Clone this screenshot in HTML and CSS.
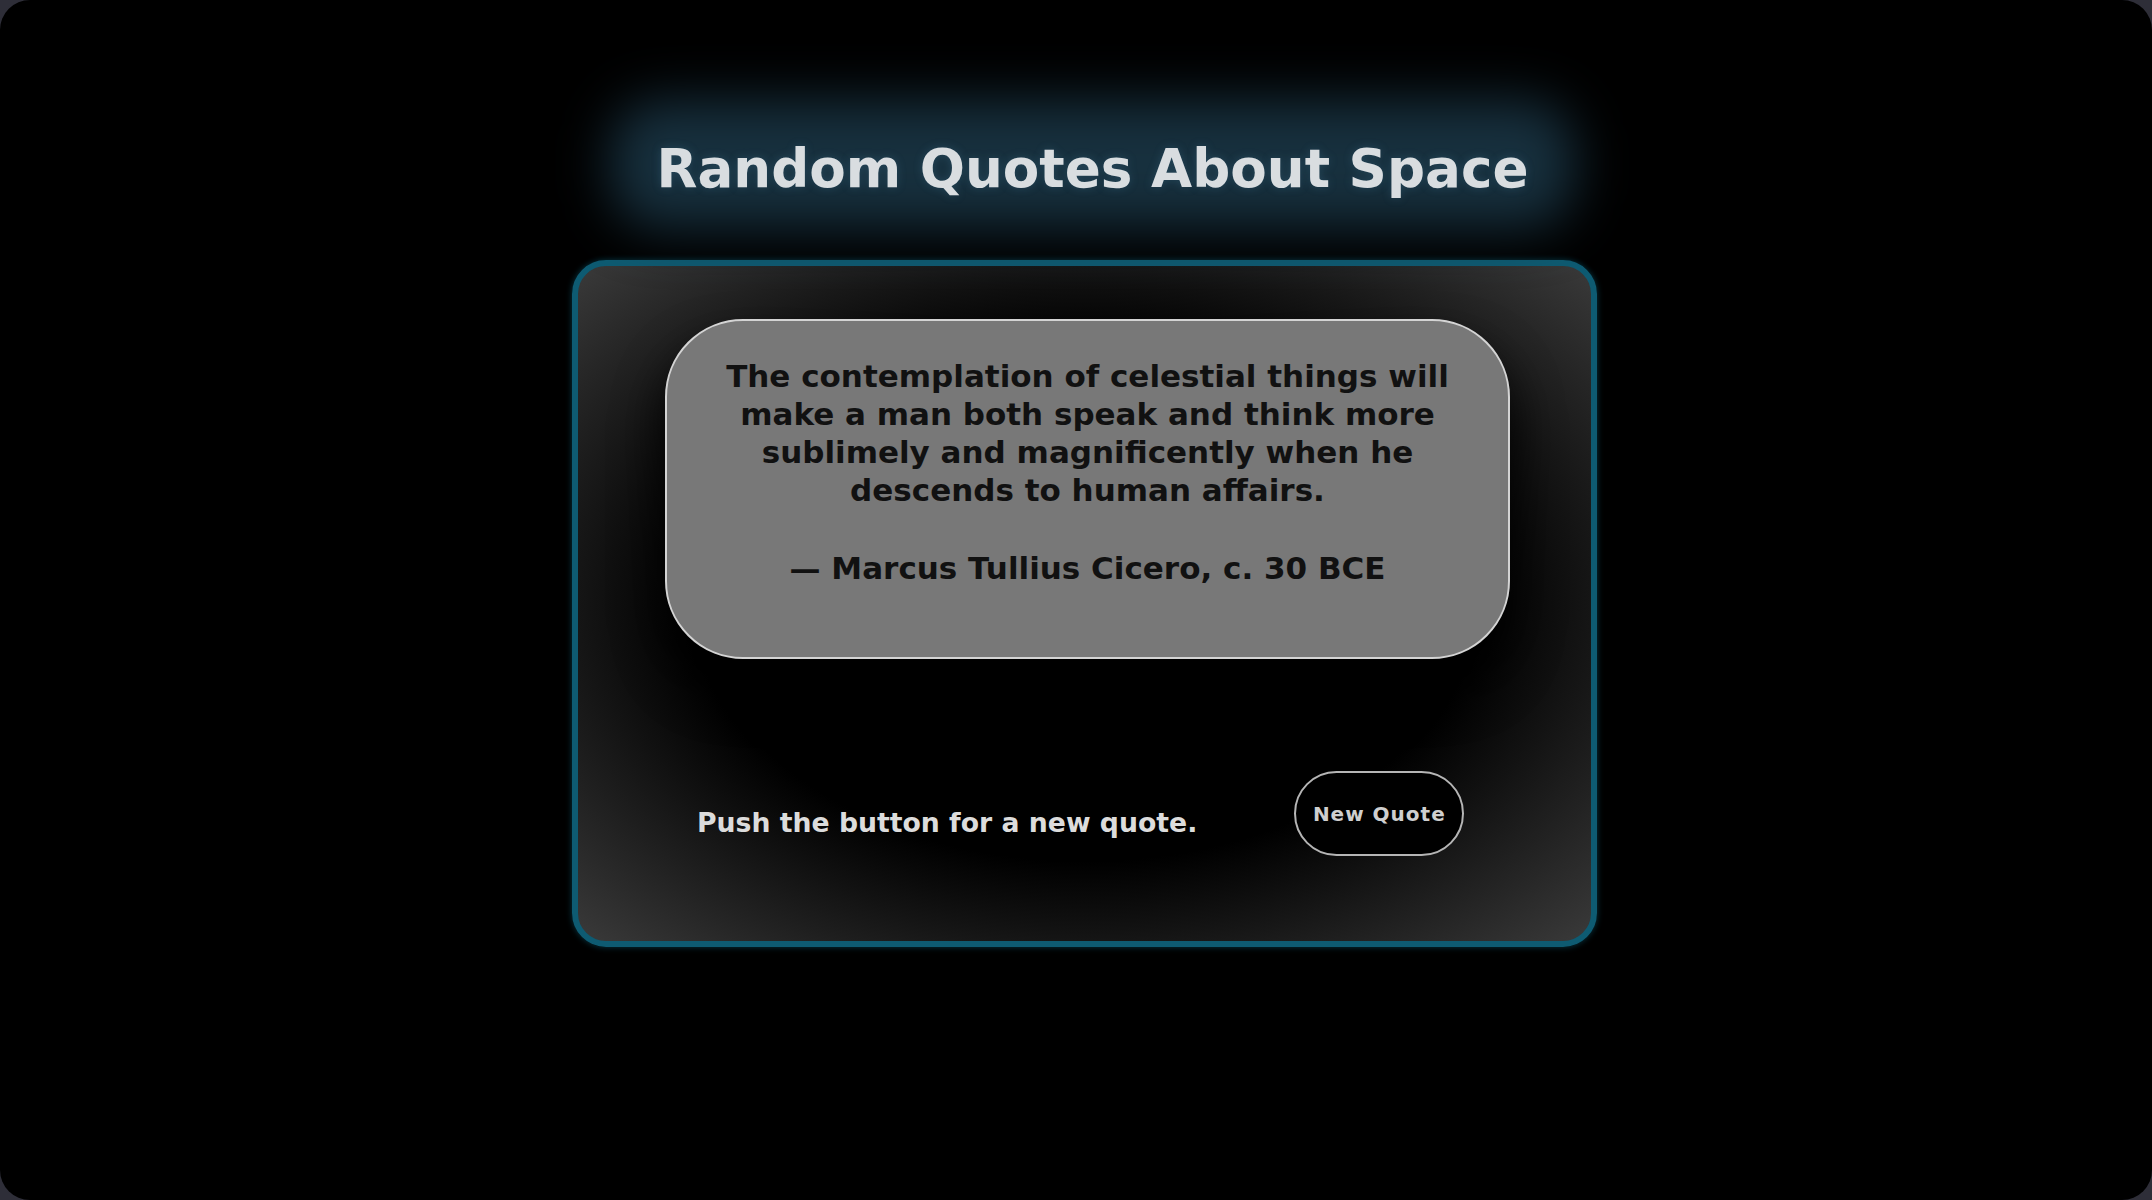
FILE: index.html
```html
<!DOCTYPE html>
<html lang="en">
<head>
<meta charset="utf-8">
<title>Random Quotes About Space</title>
<link rel="stylesheet" href="styles.css">
</head>
<body>
<div class="screen">
  <div class="wrapper">
    <h1 class="title">Random Quotes About Space</h1>
    <div class="card">
      <div class="quote-box">
        <p class="quote-text">The contemplation of celestial things will make a man both speak and think more sublimely and magnificently when he descends to human affairs.</p>
        <p class="quote-author">— Marcus Tullius Cicero, c. 30 BCE</p>
      </div>
      <div class="controls">
        <p class="hint">Push the button for a new quote.</p>
        <button class="new-quote" type="button">New Quote</button>
      </div>
    </div>
  </div>
</div>
</body>
</html>
```

FILE: styles.css
```css
html, body {
  margin: 0;
  padding: 0;
}

body {
  background: #2e2e38;
  width: 2152px;
  height: 1200px;
  overflow: hidden;
  font-family: "DejaVu Sans", Verdana, sans-serif;
}

.screen {
  width: 2152px;
  height: 1200px;
  background: #000;
  border-radius: 30px;
  overflow: hidden;
}

.wrapper {
  display: flex;
  flex-direction: column;
  align-items: center;
  padding-top: 138px;
  padding-left: 17px;
}

.title {
  position: relative;
  margin: 0 0 0 16px;
  font-size: 53.2px;
  line-height: 62px;
  font-weight: bold;
  color: #d9dde0;
  text-shadow: 0 0 10px rgba(80, 140, 175, 0.25);
  z-index: 0;
}

.title::before {
  content: "";
  position: absolute;
  top: -38px;
  bottom: -28px;
  left: -46px;
  right: -46px;
  background: #17303e;
  border-radius: 50px;
  filter: blur(26px);
  z-index: -1;
}

.card {
  margin-top: 60px;
  width: 1013px;
  box-sizing: content-box;
  border: 6px solid #0e5b72;
  border-radius: 34px;
  box-shadow: 0 0 6px rgba(14, 91, 114, 0.6);
  background: radial-gradient(ellipse at center, #000 54%, #3a3a3a 100%);
  padding: 53px 0 85px 0;
  display: flex;
  flex-direction: column;
}

.quote-box {
  margin-left: 87px;
  width: 845px;
  height: 340px;
  box-sizing: border-box;
  border: 2px solid #d4d4d4;
  border-radius: 78px;
  background: #787878;
  box-shadow: 0 30px 50px #000;
  padding: 36px 40px 0 40px;
  text-align: center;
  color: #111;
}

.quote-text,
.quote-author {
  margin: 0;
  font-size: 31px;
  line-height: 38px;
  font-weight: bold;
}

.quote-author {
  margin-top: 40px;
}

.controls {
  margin-top: 112px;
  display: flex;
  align-items: flex-start;
  padding-left: 119px;
  gap: 97px;
  height: 85px;
}

.hint {
  margin: 36px 0 0 0;
  font-size: 26.7px;
  line-height: 32px;
  font-weight: bold;
  color: #dcdcdc;
  white-space: nowrap;
}

.new-quote {
  width: 170px;
  height: 85px;
  box-sizing: border-box;
  border: 2px solid #b5b5b5;
  border-radius: 43px;
  background: #000;
  color: #cfcfcf;
  font-family: "DejaVu Sans", Verdana, sans-serif;
  font-size: 20px;
  font-weight: bold;
  letter-spacing: 1px;
  padding: 0;
  cursor: pointer;
}
```
